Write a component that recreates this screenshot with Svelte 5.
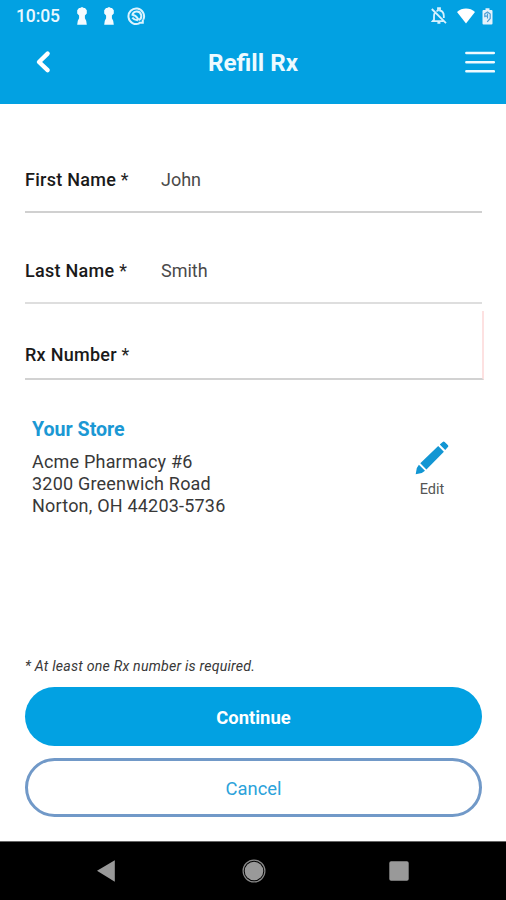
<script>
  const fields = [
    { id: 'first', label: 'First Name', value: 'John' },
    { id: 'last', label: 'Last Name', value: 'Smith' },
    { id: 'rx', label: 'Rx Number', value: '' }
  ];
  const address = ['Acme Pharmacy #6', '3200 Greenwich Road', 'Norton, OH 44203-5736'];
</script>

<div class="screen">
  <header>
    <div class="status">
      <span class="time">10:05</span>
      {#each [0, 1] as n (n)}
        <svg class="keyhole" width="12" height="18" viewBox="0 0 12 18" fill="#f4fbff">
          <path d="M5 .2h2l.6.9H9l1.8 2.1v3.3L8.9 8.6v2.6l1.3 2.6.6 4H1.2l.6-4 1.3-2.6V8.6L1.2 6.5V3.2L3 1.1h1.4Z" />
        </svg>
      {/each}
      <svg class="ring" width="19" height="19" viewBox="0 0 19 19" fill="none" stroke="#dcf3fe" stroke-width="2">
        <path d="M12.4 16.4A7.8 7.8 0 1 1 16.4 12.4M11.6 15.7h4.2v-3.3M5.3 8.6a4.5 4.5 0 1 1 6.2 4.6M5.3 8.1c3.4-.2 4.6 2.2 6.2 4.4M5.3 10.7c1.5 1.9 3.2 2.7 5.6 2.6" />
      </svg>
      <div class="system">
        <svg class="bell" width="16" height="18" viewBox="0 0 16 18" fill="none" stroke="#d8f2fe" stroke-width="1.8">
          <path d="m.8 2 14.2 14.2M3.6 6.2c-.5 1-.6 2-.6 3.4v3l-1.3 1.5h10.6M5.4 4.2 7 3.5V1.2h2v2.3c2.5.6 3.8 2.8 3.8 5.5v2M6.4 15.8h3" />
        </svg>
        <svg class="wifi" width="18" height="16" viewBox="0 0 18 16" fill="#fff">
          <path d="M0 3.9C5-.7 13-.7 18 3.9L9 15.4Z" />
        </svg>
        <svg class="battery" width="11" height="17" viewBox="0 0 11 17">
          <path d="M3.5.3h4v1.8h2q1 0 1 1v12.4q0 1-1 1h-8q-1 0-1-1V3.1q0-1 1-1h2Z" fill="#e5f2fb" />
          <path d="M2.8 9.2V5.8L5.5 4l2.7 2v4.5l-3 3.3M5.5 5.5v5M2.8 8.2h2.7" fill="none" stroke="#4d9fd6" stroke-width="1.2" />
        </svg>
      </div>
    </div>
    <div class="titlebar">
      <button class="icon" aria-label="Back">
        <svg width="16" height="24" viewBox="0 0 16 24" fill="none" stroke="#fff" stroke-width="4.4" stroke-linecap="round" stroke-linejoin="round">
          <path d="M12.6 3.6 4 12l8.6 8.2" />
        </svg>
      </button>
      <h1>Refill Rx</h1>
      <button class="icon" aria-label="Menu">
        <svg width="30" height="24" viewBox="0 0 30 24" stroke="#effaff" stroke-width="2.6" stroke-linecap="round">
          <path d="M1.4 3h27.4M1.4 12.2h27.4M1.4 21.3h27.4" />
        </svg>
      </button>
    </div>
  </header>

  <main>
    {#each fields as field (field.id)}
      <div class="field {field.id}">
        <span class="label"><b>{field.label}</b> *</span>
        <span class="value">{field.value}</span>
      </div>
    {/each}

    <section class="store">
      <div class="details">
        <h2>Your Store</h2>
        {#each address as line (line)}
          <p>{line}</p>
        {/each}
      </div>
      <button class="edit">
        <svg width="34" height="34" viewBox="0 0 34 34" fill="#1296d3">
          <path d="M23.2 5 28.9 10.7 11.4 28.4 5.3 22.3ZM24.8 3.6 27.7.9q1-.8 2 .1l3.3 3.3q.8.9-.1 1.8L30.2 9ZM3.9 23.7 10 29.8 6.8 32.1.7 33.2 1.8 27.1Z" />
        </svg>
        <span>Edit</span>
      </button>
    </section>

    <footer>
      <p class="note">* At least one Rx number is required.</p>
      <button class="primary">Continue</button>
      <button class="secondary">Cancel</button>
    </footer>
  </main>

  <nav>
    <svg width="18" height="22" viewBox="0 0 18 22" fill="#999"><path d="M0 10.8 17.8.2v21.5Z" /></svg>
    <svg class="home" width="24" height="24" viewBox="0 0 24 24">
      <circle cx="12" cy="12" r="9.3" fill="#999" />
      <circle cx="12" cy="12" r="10.9" fill="none" stroke="#888" stroke-width="1.2" />
    </svg>
    <svg width="20" height="20" viewBox="0 0 20 20"><rect x=".3" y=".3" width="19.4" height="19.4" rx="1.8" fill="#999" /></svg>
  </nav>
</div>

<style>
  :global(body) { margin: 0; }
  .screen {
    width: 506px;
    height: 900px;
    display: flex;
    flex-direction: column;
    background: #fff;
    font-family: Roboto, sans-serif;
    color: #383838;
    overflow: hidden;
  }
  h1, h2, p { margin: 0; }
  button { font: inherit; border: 0; padding: 0; background: none; }
  svg { display: block; flex: none; }
  header { height: 104px; flex: none; background: #02a1e2; color: #fff; }
  .status { height: 32px; display: flex; align-items: center; padding: 0 13px 0 16px; }
  .time { width: 60px; font: 500 17.5px/32px Roboto, sans-serif; letter-spacing: -.1px; color: #e9f8ff; }
  .keyhole { margin-right: 15px; }
  .ring { margin-left: -3px; }
  .system { margin-left: auto; display: flex; align-items: center; }
  .wifi { margin: 0 7px 0 10px; }
  .titlebar { height: 60px; display: flex; align-items: center; padding: 0 11px 0 35px; }
  h1 { flex: 1; text-align: center; font-size: 24.2px; font-weight: 700; line-height: 30px; color: #edfaff; margin: 2px 10px 0 0; }

  main { flex: 1; display: flex; flex-direction: column; padding: 0 24px 24px 25px; }
  .field {
    box-sizing: border-box;
    width: 457px;
    display: flex;
    align-items: flex-end;
    border-bottom: 2px solid #d0d0d0;
    font-size: 18px;
    line-height: 22px;
  }
  .first { height: 109px; padding-bottom: 20px; }
  .last { height: 91px; padding-bottom: 20px; border-color: #dedede; }
  .rx { width: 459px; height: 69px; margin-top: 7px; padding-bottom: 12px; border-right: 2px solid #fde1e1; border-color: #d2d2d2; border-right-color: #fde1e1; }
  .label { width: 136px; color: #252525; letter-spacing: .27px; }
  .label b { font-weight: 500; color: #1a1a1a; }
  .value { color: #4a4a4a; }

  .store { display: flex; justify-content: space-between; padding: 37px 33px 0 7px; }
  h2 { font-size: 19.6px; font-weight: 700; line-height: 26px; color: #1b98d4; margin-bottom: 8px; }
  .details p { font-size: 18px; line-height: 22px; letter-spacing: .2px; }
  .edit { display: flex; flex-direction: column; align-items: center; padding-top: 24px; align-self: flex-start; }
  .edit span { font-size: 14.5px; line-height: 18px; color: #555; margin-top: 6px; }

  footer { margin-top: auto; display: flex; flex-direction: column; }
  .note { font-size: 14.2px; letter-spacing: .2px; font-style: italic; line-height: 18px; margin-bottom: 12px; }
  footer button { box-sizing: border-box; width: 457px; height: 59px; border-radius: 30px; font-size: 18.4px; }
  .primary { background: #02a1e2; color: #fff; font-weight: 700; margin-bottom: 12px; padding-top: 2px; }
  .secondary { border: 3px solid #7199c8; color: #2ba2da; padding-top: 2px; }

  nav { box-sizing: border-box; height: 59px; flex: none; background: #000; border-top: 1px solid #666; display: flex; align-items: center; justify-content: space-between; padding: 1px 97px; }
  .home { margin-left: 3px; }
</style>
